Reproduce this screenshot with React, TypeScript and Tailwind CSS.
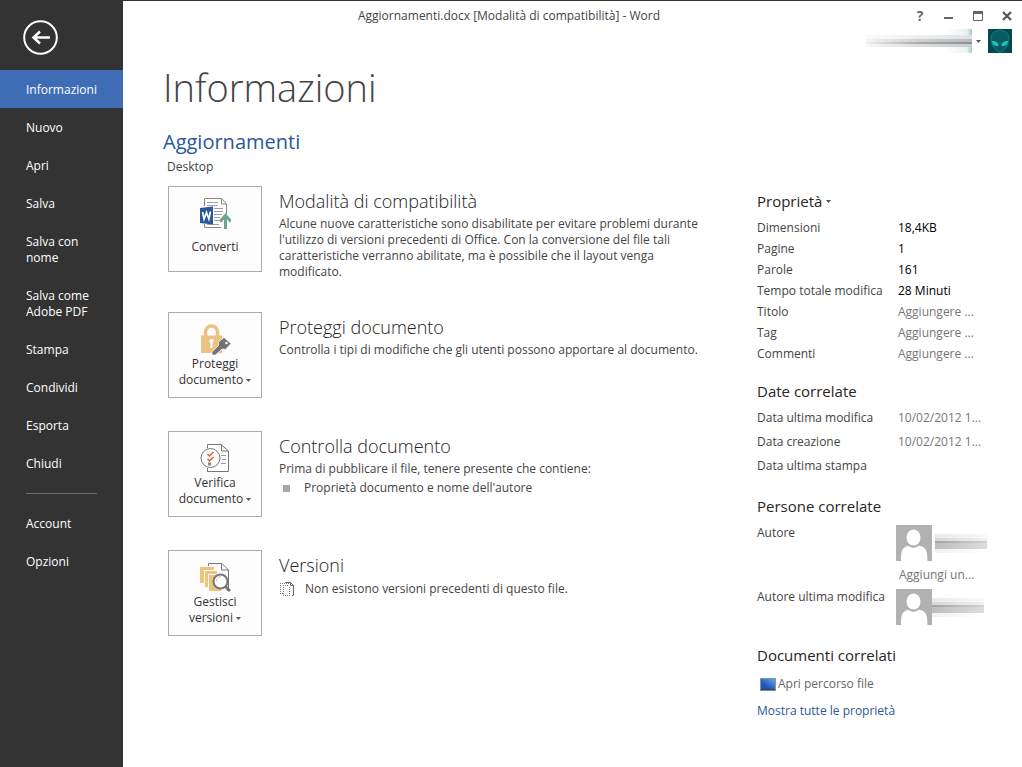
import type { ReactNode } from "react";

const PRIMARY_NAV = [
  "Informazioni",
  "Nuovo",
  "Apri",
  "Salva",
  "Salva con nome",
  "Salva come Adobe PDF",
  "Stampa",
  "Condividi",
  "Esporta",
  "Chiudi",
];
const SECONDARY_NAV = ["Account", "Opzioni"];

const STATS = [
  ["Dimensioni", "18,4KB"],
  ["Pagine", "1"],
  ["Parole", "161"],
  ["Tempo totale modifica", "28 Minuti"],
];
const EDITABLE = ["Titolo", "Tag", "Commenti"];
const DATES = [
  ["Data ultima modifica", "10/02/2012 1..."],
  ["Data creazione", "10/02/2012 1..."],
  ["Data ultima stampa", ""],
];

function Caret() {
  return (
    <svg viewBox="0 0 5 3" className="inline-block h-[3px] w-[5px] shrink-0 align-middle" aria-hidden="true">
      <path d="M0 0h5L2.5 3z" fill="#555" />
    </svg>
  );
}

function ConvertIcon() {
  return (
    <svg viewBox="0 0 32 32" className="h-8 w-8" fill="none" aria-hidden="true">
      <path d="M5.500 9V1.500h17L27.500 7v10M5.500 27v3.500h17" stroke="#8a8a8a" />
      <path d="M22.500 1.500V7h5" stroke="#8a8a8a" />
      <path d="M8 5.500h11M8 8.500h11M15 11.500h9M15 14.500h9M15 17.500h8M15 20.500h6M15 23.500h5M8 27.500h12" stroke="#a0a0a0" />
      <path d="M1 11 14 9.500v18L1 26z" fill="#2a5699" />
      <path d="m3.500 15 1.600 7 2.400-6.500 2.400 6.500 1.600-7.500" stroke="#fff" strokeWidth="1.700" />
      <path d="M26.500 32V19.500M21 24.500l5.500-6 5.500 6" stroke="#6aa58c" strokeWidth="3" />
    </svg>
  );
}

function LockIcon() {
  return (
    <svg viewBox="0 0 32 32" className="h-8 w-8" fill="none" aria-hidden="true">
      <path d="M6.500 13V9a6 6 0 0 1 12 0v4" stroke="#eac282" strokeWidth="3.500" />
      <path d="M2 12.500h21V30H2z" fill="#eac282" />
      <circle cx="12.500" cy="18" r="2.200" fill="#fff" />
      <path d="M11.500 18h2v7h-2z" fill="#fff" />
      <path d="m25 14.500 7 6-5.500 6-3.500-.5-6.500 6H13V29l6.500-6.500V19z" fill="#737373" stroke="#fff" strokeWidth=".7" />
      <circle cx="27.500" cy="20" r="1.300" fill="#fff" />
    </svg>
  );
}

function InspectIcon() {
  return (
    <svg viewBox="0 0 32 32" className="h-8 w-8" fill="none" aria-hidden="true">
      <path d="M8.500 6V2.500H22L29.500 9v20.500h-21V26" stroke="#777" />
      <path d="M22.500 2.500V9h7" stroke="#777" />
      <path d="M22 13.500h5M23 17.500h4M22 21.500h5" stroke="#999" />
      <circle cx="11.500" cy="16" r="9.500" fill="#fdfdfd" stroke="#777" />
      <path d="m8.500 12 2 2 4-4M8.500 17l2 2 4-4" stroke="#d9603b" strokeWidth="1.500" />
      <rect x="9.500" y="21" width="2" height="2" stroke="#888" />
    </svg>
  );
}

function VersionsIcon() {
  return (
    <svg viewBox="0 0 32 32" className="h-8 w-8" fill="none" aria-hidden="true">
      <path d="M9.500 5V2.500H23L29.500 9v20.500H28" stroke="#777" />
      <path d="M22.500 2.500V9h7" stroke="#777" />
      <path d="M1 6h14v3H5v13H1z" fill="#efc47a" />
      <path d="M6 10h12v3H9v13H6z" fill="#efc47a" />
      <path d="M10 14h12v16H10z" fill="#efc47a" />
      <circle cx="21.500" cy="20.500" r="7" fill="#fdfdfd" stroke="#777" strokeWidth="2" />
      <path d="M22 15.500a5 5 0 0 0-4.500 5" stroke="#ccc" />
      <path d="m26.500 25.500 4.500 4.500" stroke="#777" strokeWidth="3" />
    </svg>
  );
}

function NoVersionsIcon() {
  return (
    <svg viewBox="0 0 16 16" className="h-4 w-4 shrink-0" fill="none" aria-hidden="true">
      <path d="M1 2.500h9M1.500 4v9M4 4.500h6M4.500 6v9M10.500 6v9M1 12.500h3M4 14.500h8" stroke="#777" strokeDasharray="1 1" />
      <path d="M6 1.500h5.500l3 3v10H13" stroke="#666" />
      <path d="M11.500 1.500v3h3" stroke="#666" />
    </svg>
  );
}

function Avatar() {
  return (
    <svg viewBox="0 0 36 36" className="h-9 w-9 shrink-0" aria-hidden="true">
      <path fill="#b1b1b1" d="M0 0h36v36H0z" />
      <path fill="#fff" d="M5 36c0-9 1-13 5-14.500 2-.8 4-.7 5-1l3 2 3-2c1 .3 3 .2 5 1 4 1.500 5.500 5.500 5.500 14.500z" />
      <ellipse cx="17.500" cy="13.500" rx="8" ry="9.500" fill="#b1b1b1" />
      <ellipse cx="17.500" cy="12.500" rx="7" ry="8" fill="#fff" />
    </svg>
  );
}

function AlienPicture() {
  return (
    <svg viewBox="0 0 24 24" className="h-6 w-6" fill="none" aria-hidden="true">
      <path d="M0 0h24v24H0z" fill="#03494d" />
      <path d="M12 1.500c6 0 9 3.500 9 8.500 0 6-5.500 13-9 13S3 16 3 10c0-5 3-8.500 9-8.500z" fill="#075a5d" stroke="#15898a" strokeWidth=".8" />
      <path d="M4 12c4 0 6.500 1.500 6.500 5C6.500 17.500 4 15.500 4 12zM20 12c-4 0-6.500 1.500-6.500 5 4 .5 6.500-1.500 6.500-5z" fill="#1cc4c0" />
    </svg>
  );
}

/** Streaked bar that stands in for the account name. */
function HiddenAccountName() {
  return (
    <span className="flex h-6 w-[106px] flex-col justify-center bg-linear-to-r from-white from-75% via-[#e8f2f2] via-95% to-[#a9cccc]">
      <span className="h-1 bg-linear-to-r from-[#fbfbfb] to-[#dfe3e3]" />
      <span className="h-[3px] bg-linear-to-r from-[#f4f4f4] via-[#d0d0d0] to-[#b8bcbc]" />
      <span className="h-0.5 bg-linear-to-r from-[#eee] via-[#aaa] to-[#8c9292]" />
      <span className="h-[3px] bg-linear-to-r from-[#f8f8f8] via-[#ddd] to-[#c6cccc]" />
    </span>
  );
}

/** Streaked bar that stands in for a person's name. */
function HiddenPersonName() {
  return (
    <span className="flex h-5 w-[52px] flex-col justify-center">
      <span className="h-1 bg-linear-to-r from-[#e9e9e9] to-[#fafafa]" />
      <span className="h-[3px] bg-linear-to-r from-[#d8d8d8] to-[#f0f0f0]" />
      <span className="h-0.5 bg-linear-to-r from-[#a2a2a2] to-[#d2d2d2]" />
      <span className="h-1.5 bg-linear-to-r from-[#bdbdbd] to-[#dedede]" />
      <span className="h-1 bg-linear-to-r from-[#f1f1f1] to-white" />
    </span>
  );
}

function NavItem({ label, active = false }: { label: string; active?: boolean }) {
  return (
    <li>
      <button
        type="button"
        className={
          active
            ? "w-full bg-[#3e6db6] pt-3 pr-6 pb-2.5 pl-[26px] text-left text-white"
            : "w-full pt-3 pr-6 pb-2.5 pl-[26px] text-left text-white"
        }
      >
        {label}
      </button>
    </li>
  );
}

type CardProps = { icon: ReactNode; action: ReactNode; title: string; children: ReactNode };

function Card({ icon, action, title, children }: CardProps) {
  return (
    <section className="flex min-h-[87px] items-start gap-[17px]">
      <button
        type="button"
        className="flex h-[86px] w-[94px] shrink-0 flex-col items-center gap-px border border-[#ababab] bg-[#fdfdfd] pt-[10px] font-medium text-[#333]"
      >
        {icon}
        {action}
      </button>
      <div className="min-w-0">
        <h3 className="text-lg/[30px] font-light text-[#222]">{title}</h3>
        {children}
      </div>
    </section>
  );
}

function AsideHeading({ children }: { children: ReactNode }) {
  return <h3 className="text-[15px]/5 text-[#262626]">{children}</h3>;
}

export default function App() {
  return (
    <div className="flex min-h-screen bg-white font-['Open_Sans','Noto_Sans',sans-serif] text-xs/4 text-[#444]">
      <nav className="w-[123px] shrink-0 bg-[#333]" aria-label="File">
        <div className="h-[70px] pt-5 pl-[23px]">
          <button type="button" aria-label="Indietro" className="block">
            <svg viewBox="0 0 35 35" className="h-[35px] w-[35px]" fill="none" stroke="#fff" aria-hidden="true">
              <circle cx="17.500" cy="17.500" r="16.300" strokeWidth="2" />
              <path d="M27 17.500H11" strokeWidth="2.500" />
              <path d="m17 11.500-6.500 6 6.500 6" strokeWidth="2.500" />
            </svg>
          </button>
        </div>
        <ul>
          {PRIMARY_NAV.map((label, i) => (
            <NavItem key={label} label={label} active={i === 0} />
          ))}
        </ul>
        <hr className="mt-[11px] mr-[26px] mb-2.5 ml-[26px] border-[#6e6e6e]" />
        <ul>
          {SECONDARY_NAV.map((label) => (
            <NavItem key={label} label={label} />
          ))}
        </ul>
      </nav>

      <div className="min-w-0 flex-1 border-t border-[#333]">
        <header>
          <div className="flex h-7 items-center pt-0.5 pr-2.5">
            <p className="flex-1 pr-5 text-center">Aggiornamenti.docx [Modalità di compatibilità] - Word</p>
            <div className="flex items-center gap-[19px]">
              <button type="button" aria-label="Guida" className="w-2.5 text-sm/4 font-bold text-[#666]">
                ?
              </button>
              <button type="button" aria-label="Riduci a icona">
                <svg viewBox="0 0 10 10" className="h-2.5 w-2.5" aria-hidden="true">
                  <path d="M0 6h9v2H0z" fill="#666" />
                </svg>
              </button>
              <button type="button" aria-label="Ingrandisci">
                <svg viewBox="0 0 10 10" className="h-2.5 w-2.5" aria-hidden="true">
                  <path d="M.5 1v8.500h9V1z" fill="none" stroke="#666" />
                  <path d="M0 0h10v3H0z" fill="#666" />
                </svg>
              </button>
              <button type="button" aria-label="Chiudi finestra">
                <svg viewBox="0 0 10 10" className="h-2.5 w-2.5" aria-hidden="true">
                  <path d="m1 1 8 8m0-8L1 9" stroke="#555" strokeWidth="2.200" />
                </svg>
              </button>
            </div>
          </div>
          <div className="flex items-center justify-end pr-2.5">
            <HiddenAccountName />
            <button type="button" aria-label="Account utente" className="flex items-center gap-[7px] pl-1">
              <Caret />
              <AlienPicture />
            </button>
          </div>
        </header>

        <main className="pr-6 pl-10">
          <h1 className="mt-2.5 text-[38px]/[48px] font-light text-[#444]">Informazioni</h1>
          <h2 className="mt-[17px] text-xl/7 text-[#2b579a]">Aggiornamenti</h2>
          <p className="mt-[3px] pl-1">Desktop</p>

          <div className="mt-[11px] flex items-start gap-8 pl-[5px]">
            <div className="flex min-w-0 flex-1 flex-col gap-8">
              <Card icon={<ConvertIcon />} action={<span className="mt-[9px]">Converti</span>} title="Modalità di compatibilità">
                <p className="max-w-[420px]">
                  Alcune nuove caratteristiche sono disabilitate per evitare problemi durante l'utilizzo di versioni
                  precedenti di Office. Con la conversione del file tali caratteristiche verranno abilitate, ma è
                  possibile che il layout venga modificato.
                </p>
              </Card>
              <Card
                icon={<LockIcon />}
                action={<span>Proteggi<br />documento <Caret /></span>}
                title="Proteggi documento"
              >
                <p>Controlla i tipi di modifiche che gli utenti possono apportare al documento.</p>
              </Card>
              <Card
                icon={<InspectIcon />}
                action={<span>Verifica<br />documento <Caret /></span>}
                title="Controlla documento"
              >
                <p>Prima di pubblicare il file, tenere presente che contiene:</p>
                <ul className="mt-[3px]">
                  <li className="flex items-center gap-3.5 pl-1">
                    <span className="h-[7px] w-[7px] bg-[#a6a6a6]" />
                    Proprietà documento e nome dell'autore
                  </li>
                </ul>
              </Card>
              <Card
                icon={<VersionsIcon />}
                action={<span>Gestisci<br />versioni <Caret /></span>}
                title="Versioni"
              >
                <p className="mt-px flex items-center gap-2.5">
                  <NoVersionsIcon />
                  Non esistono versioni precedenti di questo file.
                </p>
              </Card>
            </div>

            <aside className="w-[241px] shrink-0 pt-[5px]">
              <AsideHeading>
                <button type="button" className="flex items-center gap-1">
                  Proprietà <Caret />
                </button>
              </AsideHeading>
              <dl className="mt-1.5">
                {STATS.map(([label, value]) => (
                  <div key={label} className="flex leading-[21px]">
                    <dt className="w-[141px]">{label}</dt>
                    <dd className="text-black">{value}</dd>
                  </div>
                ))}
              </dl>
              {EDITABLE.map((label) => (
                <div key={label} className="flex h-[21px] items-center">
                  <label htmlFor={label} className="w-[141px] shrink-0">
                    {label}
                  </label>
                  <input id={label} placeholder="Aggiungere ..." className="w-full min-w-0 placeholder:text-[#767676]" />
                </div>
              ))}

              <div className="mt-[17px]">
                <AsideHeading>Date correlate</AsideHeading>
              </div>
              <dl className="mt-[5px]">
                {DATES.map(([label, value]) => (
                  <div key={label} className="flex leading-6">
                    <dt className="w-[141px]">{label}</dt>
                    <dd className="text-[#767676]">{value}</dd>
                  </div>
                ))}
              </dl>

              <div className="mt-[18px]">
                <AsideHeading>Persone correlate</AsideHeading>
              </div>
              <div className="mt-[9px] flex">
                <label htmlFor="autore" className="w-[139px] shrink-0">
                  Autore
                </label>
                <div>
                  <div className="flex items-center gap-[3px]">
                    <Avatar />
                    <HiddenPersonName />
                  </div>
                  <input id="autore" placeholder="Aggiungi un..." className="my-1.5 block h-4 w-[95px] pl-[3px] placeholder:text-[#767676]" />
                </div>
              </div>
              <div className="flex">
                <p className="w-[139px] shrink-0">Autore ultima modifica</p>
                <div className="flex items-center">
                  <Avatar />
                  <HiddenPersonName />
                </div>
              </div>

              <div className="mt-5">
                <AsideHeading>Documenti correlati</AsideHeading>
              </div>
              <a href="#percorso" className="mt-[11px] flex items-center gap-0.5 pl-[3px] text-[#666]">
                <svg viewBox="0 0 16 13" className="h-[13px] w-4" aria-hidden="true">
                  <defs>
                    <linearGradient id="screen" x1="0" y1="1" x2="1" y2="0">
                      <stop offset="0.300" stopColor="#1d55b8" />
                      <stop offset="1" stopColor="#6aa6ee" />
                    </linearGradient>
                  </defs>
                  <path fill="#8793a3" d="M0 0h16v13H0z" />
                  <path fill="url(#screen)" d="M1 1h14v10H1z" />
                  <path fill="#333f50" d="M1 11h14v1H1z" />
                </svg>
                Apri percorso file
              </a>
              <a href="#proprieta" className="mt-[11px] block text-[#2b579a]">
                Mostra tutte le proprietà
              </a>
            </aside>
          </div>
        </main>
      </div>
    </div>
  );
}
